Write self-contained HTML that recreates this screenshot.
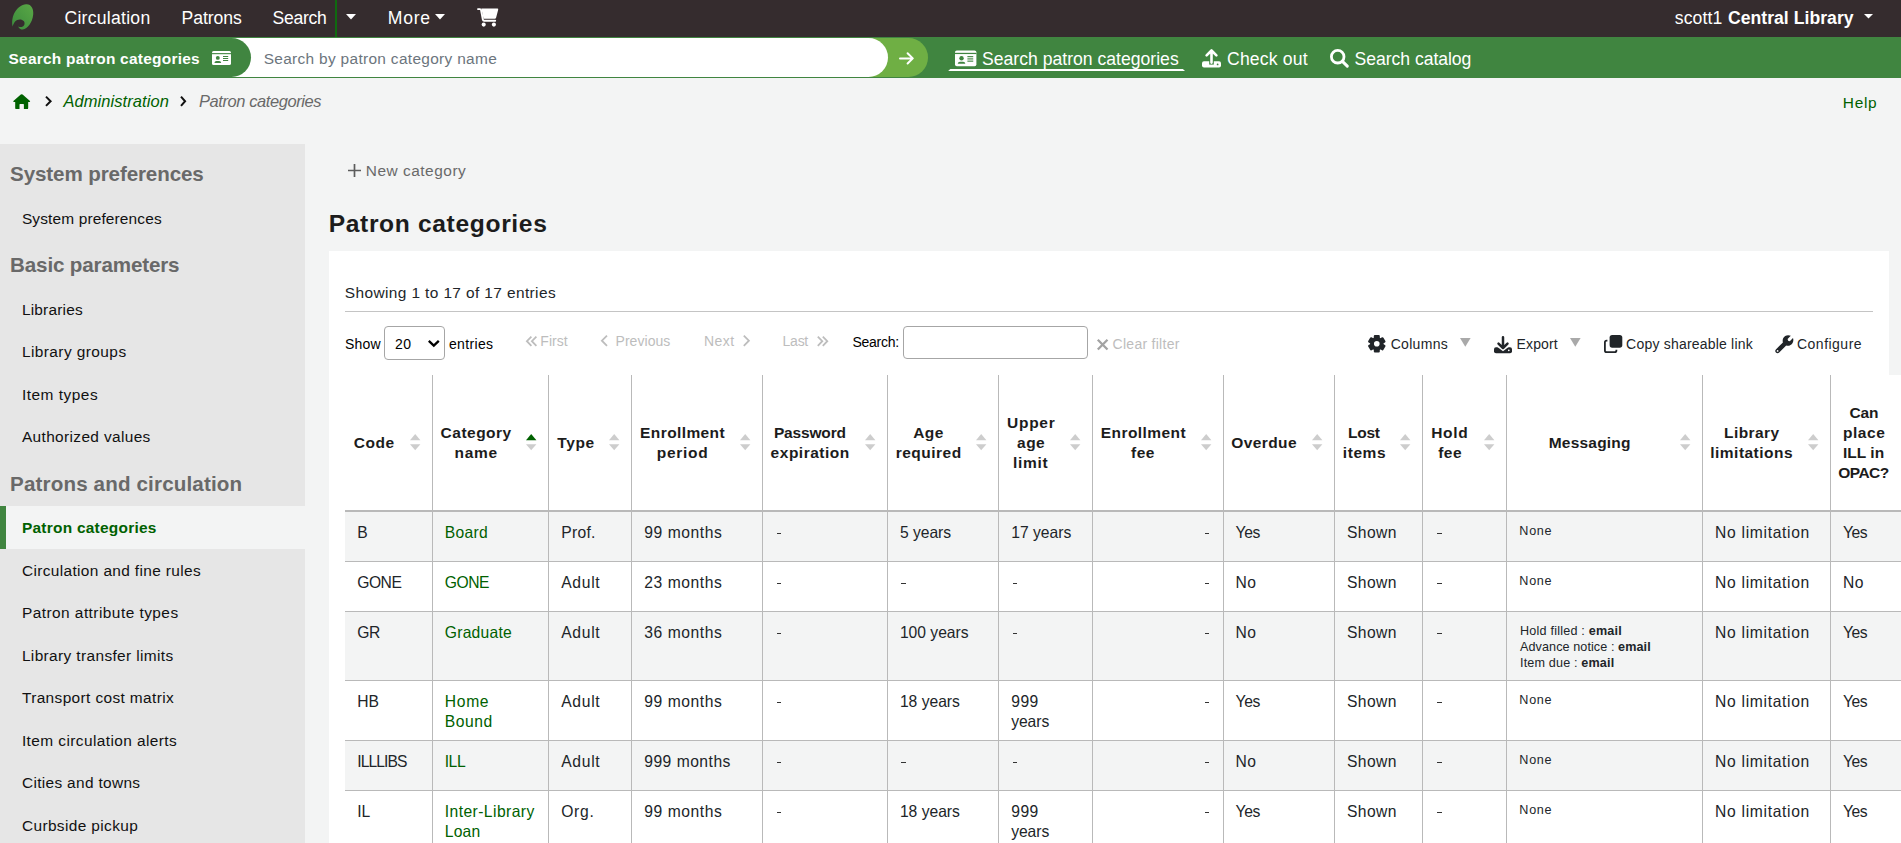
<!DOCTYPE html>
<html lang="en"><head><meta charset="utf-8"><title>Patron categories &rsaquo; Administration &rsaquo; Koha</title><style>
html,body{margin:0;padding:0}
body{width:1901px;height:843px;overflow:hidden;position:relative;background:#f3f4f4;font-family:"Liberation Sans",sans-serif;}
.t{position:absolute;white-space:pre;line-height:1;}
svg{display:block;overflow:visible}
</style></head><body>
<div style="position:absolute;left:0px;top:0px;width:1901px;height:37px;background:#352c2e;"></div>
<svg style="position:absolute;left:11.5px;top:3.5px;" width="22" height="26" viewBox="0 0 22 26"><defs><linearGradient id="lg" x1="0" y1="1" x2="1" y2="0"><stop offset="0" stop-color="#3b8a3c"/><stop offset="1" stop-color="#5aa846"/></linearGradient></defs><path fill="url(#lg)" d="M0.6 22.6 C-1.4 12.4 4.6 1.4 14.2 0.3 C19.4 0 21.8 5.2 21.2 10.6 C20.4 18.6 15.6 25 10.8 25.6 C8.6 25.6 6.8 24.4 6.2 22.4 C8.4 23.6 11 23.4 12.2 21 C13.6 17.6 11 15.4 7.8 15.4 C3.8 15.4 1.6 18.6 0.6 22.6 Z"/></svg>
<span class="t" style="letter-spacing:0.266px;left:64.42px;top:8px;font-size:17.6px;font-weight:400;font-style:normal;color:#fff;line-height:20px;">Circulation</span>
<span class="t" style="letter-spacing:-0.077px;left:181.62px;top:8px;font-size:17.6px;font-weight:400;font-style:normal;color:#fff;line-height:20px;">Patrons</span>
<span class="t" style="letter-spacing:-0.254px;left:272.42px;top:8px;font-size:17.6px;font-weight:400;font-style:normal;color:#fff;line-height:20px;">Search</span>
<div style="position:absolute;left:335px;top:0px;width:2px;height:37px;background:#0f6b0f;"></div>
<svg style="position:absolute;left:346px;top:14px;" width="10" height="5.5" viewBox="0 0 10 5.5"><path fill="#fff" d="M0 0H10L5 5.5Z"/></svg>
<span class="t" style="letter-spacing:0.700px;left:387.82px;top:8px;font-size:17.6px;font-weight:400;font-style:normal;color:#fff;line-height:20px;">More</span>
<svg style="position:absolute;left:435px;top:14px;" width="10" height="5.5" viewBox="0 0 10 5.5"><path fill="#fff" d="M0 0H10L5 5.5Z"/></svg>
<svg style="position:absolute;left:476.8px;top:8px;" width="21.4" height="18.8" viewBox="0 0 21.4 18.8"><path fill="#fff" d="M4.4 0.6H20.4Q21.5 0.6 21.2 1.7L19.1 9.7Q18.8 10.7 17.8 10.7H6.6Z"/><path fill="none" stroke="#fff" stroke-width="1.9" stroke-linecap="round" stroke-linejoin="round" d="M1 1.1H3Q3.8 1.1 4 1.9L5.9 11.7Q6.1 12.7 7.1 12.7H18.2"/><circle fill="#fff" cx="6.7" cy="16.6" r="2.05"/><circle fill="#fff" cx="16.9" cy="16.6" r="2.05"/></svg>
<span class="t" style="letter-spacing:0.085px;left:1674.82px;top:8px;font-size:17.6px;font-weight:400;font-style:normal;color:#fff;line-height:20px;">scott1</span>
<span class="t" style="letter-spacing:0.037px;left:1727.92px;top:8px;font-size:17.6px;font-weight:700;font-style:normal;color:#fff;line-height:20px;">Central Library</span>
<svg style="position:absolute;left:1863.8px;top:14px;" width="9" height="4.6" viewBox="0 0 9 4.6"><path fill="#fff" d="M0 0H9L4.5 4.6Z"/></svg>
<div style="position:absolute;left:0px;top:37px;width:1901px;height:41px;background:#408540;"></div>
<div style="position:absolute;left:868px;top:38px;width:60px;height:39px;background:#6faf44;border-radius:0 19.5px 19.5px 0;"></div>
<div style="position:absolute;left:200px;top:38px;width:688px;height:39px;background:#fff;border-radius:0 19.5px 19.5px 0;"></div>
<div style="position:absolute;left:0px;top:38px;width:251px;height:39px;background:#408540;border-radius:0 19.5px 19.5px 0;"></div>
<span class="t" style="letter-spacing:0.251px;left:8.53px;top:50px;font-size:15.45px;font-weight:700;font-style:normal;color:#fff;line-height:17px;">Search patron categories</span>
<svg style="position:absolute;left:212px;top:51px;" width="19" height="14" viewBox="0 0 19 14"><rect x="0" y="0" width="19" height="14" rx="1.6" fill="#fff"/><rect x="0" y="2.1" width="19" height="1.1" fill="#408540"/><circle cx="5.8" cy="6.9" r="1.95" fill="#408540"/><path fill="#408540" d="M2.4 11.9Q2.6 10 4.4 10H7.2Q9 10 9.2 11.9Z"/><rect x="11" y="5" width="5.2" height="1" fill="#408540"/><rect x="11" y="7" width="5.2" height="1" fill="#408540"/><rect x="11" y="9" width="5.2" height="1" fill="#408540"/></svg>
<span class="t" style="letter-spacing:0.317px;left:263.63px;top:50px;font-size:15.45px;font-weight:400;font-style:normal;color:#6c757d;line-height:17px;">Search by patron category name</span>
<svg style="position:absolute;left:898.7px;top:51.6px;" width="15" height="12.8" viewBox="0 0 15 12.8"><path fill="none" stroke="#fff" stroke-width="2" stroke-linecap="round" stroke-linejoin="round" d="M1 6.4H13.4M8.6 1.3L13.8 6.4L8.6 11.5"/></svg>
<svg style="position:absolute;left:955.4px;top:49.9px;" width="21.4" height="16.7" viewBox="0 0 19 14"><rect x="0" y="0" width="19" height="14" rx="1.6" fill="#fff"/><rect x="0" y="2.1" width="19" height="1.1" fill="#408540"/><circle cx="5.8" cy="6.9" r="1.95" fill="#408540"/><path fill="#408540" d="M2.4 11.9Q2.6 10 4.4 10H7.2Q9 10 9.2 11.9Z"/><rect x="11" y="5" width="5.2" height="1" fill="#408540"/><rect x="11" y="7" width="5.2" height="1" fill="#408540"/><rect x="11" y="9" width="5.2" height="1" fill="#408540"/></svg>
<span class="t" style="letter-spacing:0.004px;left:982.02px;top:49px;font-size:17.6px;font-weight:400;font-style:normal;color:#fff;line-height:20px;">Search patron categories</span>
<div style="position:absolute;left:948.2px;top:69px;width:236.8px;height:2.1px;background:#fff;clip-path:polygon(2.1px 0,calc(100% - 2.1px) 0,100% 100%,0 100%);"></div>
<svg style="position:absolute;left:1201.8px;top:49px;" width="19" height="18.5" viewBox="0 0 19 18.5"><rect x="0" y="12.3" width="19" height="6.2" rx="2" fill="#fff"/><rect x="7.2" y="5" width="4.6" height="10.6" fill="#408540"/><path fill="none" stroke="#fff" stroke-width="2.6" stroke-linecap="round" stroke-linejoin="round" d="M9.5 13.6V1.8M4.6 6.4L9.5 1.5L14.4 6.4"/><circle cx="15.6" cy="15.4" r="0.9" fill="#408540"/></svg>
<span class="t" style="letter-spacing:0.183px;left:1227.02px;top:49px;font-size:17.6px;font-weight:400;font-style:normal;color:#fff;line-height:20px;">Check out</span>
<svg style="position:absolute;left:1330.2px;top:49px;" width="19" height="18.5" viewBox="0 0 19 18.5"><circle cx="7.7" cy="7.7" r="6.3" fill="none" stroke="#fff" stroke-width="2.8"/><path stroke="#fff" stroke-width="3" stroke-linecap="round" d="M12.4 12.4L17.3 17.1"/></svg>
<span class="t" style="letter-spacing:-0.038px;left:1354.52px;top:49px;font-size:17.6px;font-weight:400;font-style:normal;color:#fff;line-height:20px;">Search catalog</span>
<svg style="position:absolute;left:12.8px;top:93.9px;" width="17.4" height="15.1" viewBox="0 0 17.4 15.1"><path fill="#006100" d="M8.7 0.2Q9.2 0.2 9.6 0.6L17 7Q17.6 7.7 16.6 7.9H15.2V13.9Q15.2 15.1 14 15.1H10.9V10.6Q10.9 10 10.3 10H7.1Q6.5 10 6.5 10.6V15.1H3.4Q2.2 15.1 2.2 13.9V7.9H0.8Q-0.2 7.7 0.4 7L7.8 0.6Q8.2 0.2 8.7 0.2Z"/></svg>
<svg style="position:absolute;left:45.4px;top:95.5px;" width="7" height="10.5" viewBox="0 0 7 10.5"><path fill="none" stroke="#111" stroke-width="2.0" d="M1 0.6L5.6 5.25L1 9.9"/></svg>
<span class="t" style="letter-spacing:0.094px;left:63.38px;top:92px;font-size:16.48px;font-weight:400;font-style:italic;color:#006100;line-height:18px;">Administration</span>
<svg style="position:absolute;left:180.1px;top:95.5px;" width="6.5" height="10.5" viewBox="0 0 6.5 10.5"><path fill="none" stroke="#111" stroke-width="2.0" d="M1 0.6L5.1 5.25L1 9.9"/></svg>
<span class="t" style="letter-spacing:-0.401px;left:198.88px;top:92px;font-size:16.48px;font-weight:400;font-style:italic;color:#696969;line-height:18px;">Patron categories</span>
<span class="t" style="letter-spacing:0.700px;left:1842.83px;top:94px;font-size:15.45px;font-weight:400;font-style:normal;color:#006100;line-height:17px;">Help</span>
<div style="position:absolute;left:0px;top:144px;width:305px;height:699px;background:#e6e6e6;"></div>
<div style="position:absolute;left:0px;top:506px;width:305px;height:43px;background:#f3f4f4;border-left:6px solid #408540;box-sizing:border-box;"></div>
<span class="t" style="letter-spacing:-0.119px;left:10.07px;top:162px;font-size:20.6px;font-weight:700;font-style:normal;color:#696969;line-height:23px;">System preferences</span>
<span class="t" style="letter-spacing:-0.151px;left:10.07px;top:253px;font-size:20.6px;font-weight:700;font-style:normal;color:#696969;line-height:23px;">Basic parameters</span>
<span class="t" style="letter-spacing:0.144px;left:10.07px;top:472px;font-size:20.6px;font-weight:700;font-style:normal;color:#696969;line-height:23px;">Patrons and circulation</span>
<span class="t" style="letter-spacing:0.142px;left:21.93px;top:210px;font-size:15.45px;font-weight:400;font-style:normal;color:#111;line-height:17px;">System preferences</span>
<span class="t" style="letter-spacing:0.198px;left:21.93px;top:301px;font-size:15.45px;font-weight:400;font-style:normal;color:#111;line-height:17px;">Libraries</span>
<span class="t" style="letter-spacing:0.423px;left:21.93px;top:343px;font-size:15.45px;font-weight:400;font-style:normal;color:#111;line-height:17px;">Library groups</span>
<span class="t" style="letter-spacing:0.497px;left:21.93px;top:386px;font-size:15.45px;font-weight:400;font-style:normal;color:#111;line-height:17px;">Item types</span>
<span class="t" style="letter-spacing:0.354px;left:21.93px;top:428px;font-size:15.45px;font-weight:400;font-style:normal;color:#111;line-height:17px;">Authorized values</span>
<span class="t" style="letter-spacing:0.355px;left:21.93px;top:562px;font-size:15.45px;font-weight:400;font-style:normal;color:#111;line-height:17px;">Circulation and fine rules</span>
<span class="t" style="letter-spacing:0.450px;left:21.93px;top:604px;font-size:15.45px;font-weight:400;font-style:normal;color:#111;line-height:17px;">Patron attribute types</span>
<span class="t" style="letter-spacing:0.365px;left:21.93px;top:647px;font-size:15.45px;font-weight:400;font-style:normal;color:#111;line-height:17px;">Library transfer limits</span>
<span class="t" style="letter-spacing:0.369px;left:21.93px;top:689px;font-size:15.45px;font-weight:400;font-style:normal;color:#111;line-height:17px;">Transport cost matrix</span>
<span class="t" style="letter-spacing:0.410px;left:21.93px;top:732px;font-size:15.45px;font-weight:400;font-style:normal;color:#111;line-height:17px;">Item circulation alerts</span>
<span class="t" style="letter-spacing:0.322px;left:21.93px;top:774px;font-size:15.45px;font-weight:400;font-style:normal;color:#111;line-height:17px;">Cities and towns</span>
<span class="t" style="letter-spacing:0.370px;left:21.93px;top:817px;font-size:15.45px;font-weight:400;font-style:normal;color:#111;line-height:17px;">Curbside pickup</span>
<span class="t" style="letter-spacing:0.255px;left:21.93px;top:519px;font-size:15.45px;font-weight:700;font-style:normal;color:#006100;line-height:17px;">Patron categories</span>
<svg style="position:absolute;left:347.5px;top:163.7px;" width="13" height="13" viewBox="0 0 13 13"><path stroke="#5c5c5c" stroke-width="1.7" d="M6.5 0V13M0 6.5H13"/></svg>
<span class="t" style="letter-spacing:0.518px;left:365.73px;top:162px;font-size:15.45px;font-weight:400;font-style:normal;color:#696969;line-height:17px;">New category</span>
<span class="t" style="letter-spacing:0.654px;left:328.67px;top:210px;font-size:24.6px;font-weight:700;font-style:normal;color:#1c1c1c;line-height:27px;">Patron categories</span>
<div style="position:absolute;left:329px;top:251px;width:1560px;height:592px;background:#fff;"></div>
<span class="t" style="letter-spacing:0.386px;left:344.83px;top:284px;font-size:15.45px;font-weight:400;font-style:normal;color:#212529;line-height:17px;">Showing 1 to 17 of 17 entries</span>
<div style="position:absolute;left:345px;top:311px;width:1528px;height:1px;background:#c4c4c4;"></div>
<span class="t" style="letter-spacing:0.243px;left:344.9px;top:336px;font-size:14.01px;font-weight:400;font-style:normal;color:#000;line-height:16px;">Show</span>
<div style="position:absolute;left:384px;top:326px;width:61px;height:34px;box-sizing:border-box;border:1px solid #a6a6a6;border-radius:4px;background:#fff"></div>
<span class="t" style="letter-spacing:0.450px;left:395.0px;top:336px;font-size:14.01px;font-weight:400;font-style:normal;color:#000;line-height:16px;">20</span>
<svg style="position:absolute;left:428.4px;top:340.4px;" width="11.6" height="7" viewBox="0 0 11.6 7"><path fill="none" stroke="#000" stroke-width="2.3" stroke-linejoin="miter" d="M0.8 0.9L5.8 5.7L10.8 0.9"/></svg>
<span class="t" style="letter-spacing:0.338px;left:449.0px;top:336px;font-size:14.01px;font-weight:400;font-style:normal;color:#000;line-height:16px;">entries</span>
<svg style="position:absolute;left:525.6px;top:335.6px;" width="6.2" height="10.4" viewBox="0 0 6.2 10.4"><path fill="none" stroke="#bdbdbd" stroke-width="1.8" d="M5.4 0.6L0.9 5.2L5.4 9.8"/></svg>
<svg style="position:absolute;left:531.2px;top:335.6px;" width="6.2" height="10.4" viewBox="0 0 6.2 10.4"><path fill="none" stroke="#bdbdbd" stroke-width="1.8" d="M5.4 0.6L0.9 5.2L5.4 9.8"/></svg>
<span class="t" style="letter-spacing:0.035px;left:540.3px;top:333px;font-size:14.01px;font-weight:400;font-style:normal;color:#bdbdbd;line-height:16px;">First</span>
<svg style="position:absolute;left:600.6px;top:334.9px;" width="6.8" height="11.4" viewBox="0 0 6.8 11.4"><path fill="none" stroke="#bdbdbd" stroke-width="1.8" d="M6.0 0.6L0.9 5.7L6.0 10.8"/></svg>
<span class="t" style="letter-spacing:0.056px;left:615.5px;top:333px;font-size:14.01px;font-weight:400;font-style:normal;color:#bdbdbd;line-height:16px;">Previous</span>
<span class="t" style="letter-spacing:0.488px;left:703.9px;top:333px;font-size:14.01px;font-weight:400;font-style:normal;color:#bdbdbd;line-height:16px;">Next</span>
<svg style="position:absolute;left:742.5px;top:334.9px;" width="6.8" height="11.4" viewBox="0 0 6.8 11.4"><path fill="none" stroke="#bdbdbd" stroke-width="1.8" d="M0.8 0.6L5.8999999999999995 5.7L0.8 10.8"/></svg>
<span class="t" style="letter-spacing:-0.270px;left:782.6px;top:333px;font-size:14.01px;font-weight:400;font-style:normal;color:#bdbdbd;line-height:16px;">Last</span>
<svg style="position:absolute;left:816.5px;top:335.6px;" width="6.2" height="10.4" viewBox="0 0 6.2 10.4"><path fill="none" stroke="#bdbdbd" stroke-width="1.8" d="M0.8 0.6L5.3 5.2L0.8 9.8"/></svg>
<svg style="position:absolute;left:822.1px;top:335.6px;" width="6.2" height="10.4" viewBox="0 0 6.2 10.4"><path fill="none" stroke="#bdbdbd" stroke-width="1.8" d="M0.8 0.6L5.3 5.2L0.8 9.8"/></svg>
<span class="t" style="letter-spacing:-0.265px;left:852.5px;top:334px;font-size:14.01px;font-weight:400;font-style:normal;color:#000;line-height:16px;">Search:</span>
<div style="position:absolute;left:903px;top:326px;width:185px;height:33px;box-sizing:border-box;border:1px solid #a6a6a6;border-radius:4px;background:#fff"></div>
<svg style="position:absolute;left:1097.1px;top:338.7px;" width="11.3" height="11.3" viewBox="0 0 11.3 11.3"><path stroke="#a3a3a3" stroke-width="2.3" d="M0.8 0.8L10.5 10.5M10.5 0.8L0.8 10.5"/></svg>
<span class="t" style="letter-spacing:0.269px;left:1112.6px;top:336px;font-size:14.01px;font-weight:400;font-style:normal;color:#bdbdbd;line-height:16px;">Clear filter</span>
<svg style="position:absolute;left:1368.1px;top:335.2px;" width="17.6" height="17.6" viewBox="0 0 17.6 17.6"><rect x="5.81" y="0" width="5.98" height="5.28" rx="1.06" transform="rotate(0 8.8 8.8)" fill="#212529"/><rect x="5.81" y="0" width="5.98" height="5.28" rx="1.06" transform="rotate(60 8.8 8.8)" fill="#212529"/><rect x="5.81" y="0" width="5.98" height="5.28" rx="1.06" transform="rotate(120 8.8 8.8)" fill="#212529"/><rect x="5.81" y="0" width="5.98" height="5.28" rx="1.06" transform="rotate(180 8.8 8.8)" fill="#212529"/><rect x="5.81" y="0" width="5.98" height="5.28" rx="1.06" transform="rotate(240 8.8 8.8)" fill="#212529"/><rect x="5.81" y="0" width="5.98" height="5.28" rx="1.06" transform="rotate(300 8.8 8.8)" fill="#212529"/><circle cx="8.8" cy="8.8" r="6.69" fill="#212529"/><circle cx="8.8" cy="8.8" r="2.82" fill="#fff"/></svg>
<span class="t" style="letter-spacing:0.302px;left:1390.7px;top:336px;font-size:14.01px;font-weight:400;font-style:normal;color:#212529;line-height:16px;">Columns</span>
<svg style="position:absolute;left:1460.2px;top:338px;" width="10.6" height="8.8" viewBox="0 0 10.6 8.8"><path fill="#a9a9a9" d="M0 0H10.6L5.3 8.8Z"/></svg>
<svg style="position:absolute;left:1493.7px;top:335.5px;" width="18" height="17.2" viewBox="0 0 18 17.2"><rect x="0" y="11.2" width="18" height="6" rx="2" fill="#212529"/><path fill="#fff" d="M3.4 11H14.6L9 15.2Z"/><path fill="none" stroke="#212529" stroke-width="2.5" stroke-linecap="round" stroke-linejoin="round" d="M9 1.3V11.6M4.5 7.6L9 12L13.5 7.6"/><circle cx="14.8" cy="14.3" r="0.85" fill="#fff"/></svg>
<span class="t" style="letter-spacing:0.118px;left:1516.6px;top:336px;font-size:14.01px;font-weight:400;font-style:normal;color:#212529;line-height:16px;">Export</span>
<svg style="position:absolute;left:1570.3px;top:338px;" width="10.6" height="8.8" viewBox="0 0 10.6 8.8"><path fill="#a9a9a9" d="M0 0H10.6L5.3 8.8Z"/></svg>
<svg style="position:absolute;left:1603.7px;top:334.7px;" width="18.3" height="18" viewBox="0 0 18.3 18"><rect x="5.6" y="0" width="12.7" height="12.7" rx="2.6" fill="#212529"/><path fill="none" stroke="#212529" stroke-width="1.8" stroke-linejoin="round" d="M3.4 5.6H2.6Q0.9 5.6 0.9 7.3V15.4Q0.9 17.1 2.6 17.1H10.7Q12.4 17.1 12.4 15.4V14.8"/></svg>
<span class="t" style="letter-spacing:0.205px;left:1626.1px;top:336px;font-size:14.01px;font-weight:400;font-style:normal;color:#212529;line-height:16px;">Copy shareable link</span>
<svg style="position:absolute;left:1774.5px;top:334.7px;" width="18.5" height="18.4" viewBox="0 0 18.5 18.4"><path fill="#212529" d="M13.1 0.2C14.3 0.2 15.2 0.5 15.8 0.8L12.6 4L13.1 5.7L14.8 6.2L18 3C18.5 4.3 18.6 6.3 17.6 8C16.3 10.3 13.6 11.3 11.2 10.6L4.2 17.6C3.3 18.5 1.8 18.5 0.9 17.6C0 16.7 0 15.3 0.9 14.4L7.9 7.4C7.2 5 8 2.4 10.2 1C11.1 0.4 12.1 0.2 13.1 0.2Z"/><circle cx="2.6" cy="15.9" r="0.9" fill="#fff"/></svg>
<span class="t" style="letter-spacing:0.482px;left:1797.0px;top:336px;font-size:14.01px;font-weight:400;font-style:normal;color:#212529;line-height:16px;">Configure</span>
<div style="position:absolute;left:345px;top:375px;width:1556px;height:468px;background:#fff;"></div>
<div style="position:absolute;left:345px;top:512px;width:1556px;height:49px;background:#f3f4f4;"></div>
<div style="position:absolute;left:345px;top:612px;width:1556px;height:68px;background:#f3f4f4;"></div>
<div style="position:absolute;left:345px;top:741px;width:1556px;height:49px;background:#f3f4f4;"></div>
<div style="position:absolute;left:345px;top:510px;width:1556px;height:2px;background:#b9b9b9;"></div>
<div style="position:absolute;left:345px;top:561px;width:1556px;height:1px;background:#b9b9b9;"></div>
<div style="position:absolute;left:345px;top:611px;width:1556px;height:1px;background:#b9b9b9;"></div>
<div style="position:absolute;left:345px;top:680px;width:1556px;height:1px;background:#b9b9b9;"></div>
<div style="position:absolute;left:345px;top:740px;width:1556px;height:1px;background:#b9b9b9;"></div>
<div style="position:absolute;left:345px;top:790px;width:1556px;height:1px;background:#b9b9b9;"></div>
<div style="position:absolute;left:345px;top:859px;width:1556px;height:1px;background:#b9b9b9;"></div>
<div style="position:absolute;left:432px;top:375px;width:1px;height:468px;background:#b9b9b9;"></div>
<div style="position:absolute;left:548px;top:375px;width:1px;height:468px;background:#b9b9b9;"></div>
<div style="position:absolute;left:631px;top:375px;width:1px;height:468px;background:#b9b9b9;"></div>
<div style="position:absolute;left:762px;top:375px;width:1px;height:468px;background:#b9b9b9;"></div>
<div style="position:absolute;left:887px;top:375px;width:1px;height:468px;background:#b9b9b9;"></div>
<div style="position:absolute;left:998px;top:375px;width:1px;height:468px;background:#b9b9b9;"></div>
<div style="position:absolute;left:1092px;top:375px;width:1px;height:468px;background:#b9b9b9;"></div>
<div style="position:absolute;left:1223px;top:375px;width:1px;height:468px;background:#b9b9b9;"></div>
<div style="position:absolute;left:1334px;top:375px;width:1px;height:468px;background:#b9b9b9;"></div>
<div style="position:absolute;left:1422px;top:375px;width:1px;height:468px;background:#b9b9b9;"></div>
<div style="position:absolute;left:1506px;top:375px;width:1px;height:468px;background:#b9b9b9;"></div>
<div style="position:absolute;left:1702px;top:375px;width:1px;height:468px;background:#b9b9b9;"></div>
<div style="position:absolute;left:1830px;top:375px;width:1px;height:468px;background:#b9b9b9;"></div>
<span class="t" style="letter-spacing:0.480px;left:353.83px;top:434px;font-size:15.5px;font-weight:700;font-style:normal;color:#1c1c1c;line-height:17px;">Code</span>
<span class="t" style="letter-spacing:0.487px;left:440.62px;top:424px;font-size:15.5px;font-weight:700;font-style:normal;color:#1c1c1c;line-height:17px;">Category</span>
<span class="t" style="letter-spacing:0.700px;left:454.62px;top:444px;font-size:15.5px;font-weight:700;font-style:normal;color:#1c1c1c;line-height:17px;">name</span>
<span class="t" style="letter-spacing:0.656px;left:557.23px;top:434px;font-size:15.5px;font-weight:700;font-style:normal;color:#1c1c1c;line-height:17px;">Type</span>
<span class="t" style="letter-spacing:0.394px;left:640.12px;top:424px;font-size:15.5px;font-weight:700;font-style:normal;color:#1c1c1c;line-height:17px;">Enrollment</span>
<span class="t" style="letter-spacing:0.705px;left:656.73px;top:444px;font-size:15.5px;font-weight:700;font-style:normal;color:#1c1c1c;line-height:17px;">period</span>
<span class="t" style="letter-spacing:-0.163px;left:773.93px;top:424px;font-size:15.5px;font-weight:700;font-style:normal;color:#1c1c1c;line-height:17px;">Password</span>
<span class="t" style="letter-spacing:0.514px;left:770.62px;top:444px;font-size:15.5px;font-weight:700;font-style:normal;color:#1c1c1c;line-height:17px;">expiration</span>
<span class="t" style="letter-spacing:0.450px;left:913.23px;top:424px;font-size:15.5px;font-weight:700;font-style:normal;color:#1c1c1c;line-height:17px;">Age</span>
<span class="t" style="letter-spacing:0.482px;left:895.73px;top:444px;font-size:15.5px;font-weight:700;font-style:normal;color:#1c1c1c;line-height:17px;">required</span>
<span class="t" style="letter-spacing:0.700px;left:1007.12px;top:414px;font-size:15.5px;font-weight:700;font-style:normal;color:#1c1c1c;line-height:17px;">Upper</span>
<span class="t" style="letter-spacing:0.450px;left:1017.12px;top:434px;font-size:15.5px;font-weight:700;font-style:normal;color:#1c1c1c;line-height:17px;">age</span>
<span class="t" style="letter-spacing:0.700px;left:1012.93px;top:454px;font-size:15.5px;font-weight:700;font-style:normal;color:#1c1c1c;line-height:17px;">limit</span>
<span class="t" style="letter-spacing:0.427px;left:1100.82px;top:424px;font-size:15.5px;font-weight:700;font-style:normal;color:#1c1c1c;line-height:17px;">Enrollment</span>
<span class="t" style="letter-spacing:0.450px;left:1131.02px;top:444px;font-size:15.5px;font-weight:700;font-style:normal;color:#1c1c1c;line-height:17px;">fee</span>
<span class="t" style="letter-spacing:0.417px;left:1231.22px;top:434px;font-size:15.5px;font-weight:700;font-style:normal;color:#1c1c1c;line-height:17px;">Overdue</span>
<span class="t" style="letter-spacing:-0.206px;left:1347.92px;top:424px;font-size:15.5px;font-weight:700;font-style:normal;color:#1c1c1c;line-height:17px;">Lost</span>
<span class="t" style="letter-spacing:0.600px;left:1342.72px;top:444px;font-size:15.5px;font-weight:700;font-style:normal;color:#1c1c1c;line-height:17px;">items</span>
<span class="t" style="letter-spacing:0.700px;left:1431.22px;top:424px;font-size:15.5px;font-weight:700;font-style:normal;color:#1c1c1c;line-height:17px;">Hold</span>
<span class="t" style="letter-spacing:0.450px;left:1438.22px;top:444px;font-size:15.5px;font-weight:700;font-style:normal;color:#1c1c1c;line-height:17px;">fee</span>
<span class="t" style="letter-spacing:0.211px;left:1548.72px;top:434px;font-size:15.5px;font-weight:700;font-style:normal;color:#1c1c1c;line-height:17px;">Messaging</span>
<span class="t" style="letter-spacing:0.405px;left:1724.12px;top:424px;font-size:15.5px;font-weight:700;font-style:normal;color:#1c1c1c;line-height:17px;">Library</span>
<span class="t" style="letter-spacing:0.468px;left:1710.32px;top:444px;font-size:15.5px;font-weight:700;font-style:normal;color:#1c1c1c;line-height:17px;">limitations</span>
<span class="t" style="letter-spacing:-0.153px;left:1849.42px;top:404px;font-size:15.5px;font-weight:700;font-style:normal;color:#1c1c1c;line-height:17px;">Can</span>
<span class="t" style="letter-spacing:0.587px;left:1842.92px;top:424px;font-size:15.5px;font-weight:700;font-style:normal;color:#1c1c1c;line-height:17px;">place</span>
<span class="t" style="letter-spacing:0.029px;left:1842.92px;top:444px;font-size:15.5px;font-weight:700;font-style:normal;color:#1c1c1c;line-height:17px;">ILL in</span>
<span class="t" style="letter-spacing:-0.530px;left:1838.22px;top:464px;font-size:15.5px;font-weight:700;font-style:normal;color:#1c1c1c;line-height:17px;">OPAC?</span>
<svg style="position:absolute;left:410.40000000000003px;top:434px;" width="10.4" height="16.4" viewBox="0 0 10.6 16.6"><path fill="#cdcdcd" d="M0 6.4L5.3 0L10.6 6.4Z"/><path fill="#cdcdcd" d="M0 10.4L5.3 16.6L10.6 10.4Z"/></svg>
<svg style="position:absolute;left:526.4px;top:434px;" width="10.4" height="16.4" viewBox="0 0 10.6 16.6"><path fill="#006100" d="M0 6.4L5.3 0L10.6 6.4Z"/><path fill="#cdcdcd" d="M0 10.4L5.3 16.6L10.6 10.4Z"/></svg>
<svg style="position:absolute;left:609.4px;top:434px;" width="10.4" height="16.4" viewBox="0 0 10.6 16.6"><path fill="#cdcdcd" d="M0 6.4L5.3 0L10.6 6.4Z"/><path fill="#cdcdcd" d="M0 10.4L5.3 16.6L10.6 10.4Z"/></svg>
<svg style="position:absolute;left:740.4px;top:434px;" width="10.4" height="16.4" viewBox="0 0 10.6 16.6"><path fill="#cdcdcd" d="M0 6.4L5.3 0L10.6 6.4Z"/><path fill="#cdcdcd" d="M0 10.4L5.3 16.6L10.6 10.4Z"/></svg>
<svg style="position:absolute;left:865.4px;top:434px;" width="10.4" height="16.4" viewBox="0 0 10.6 16.6"><path fill="#cdcdcd" d="M0 6.4L5.3 0L10.6 6.4Z"/><path fill="#cdcdcd" d="M0 10.4L5.3 16.6L10.6 10.4Z"/></svg>
<svg style="position:absolute;left:976.4px;top:434px;" width="10.4" height="16.4" viewBox="0 0 10.6 16.6"><path fill="#cdcdcd" d="M0 6.4L5.3 0L10.6 6.4Z"/><path fill="#cdcdcd" d="M0 10.4L5.3 16.6L10.6 10.4Z"/></svg>
<svg style="position:absolute;left:1070.3999999999999px;top:434px;" width="10.4" height="16.4" viewBox="0 0 10.6 16.6"><path fill="#cdcdcd" d="M0 6.4L5.3 0L10.6 6.4Z"/><path fill="#cdcdcd" d="M0 10.4L5.3 16.6L10.6 10.4Z"/></svg>
<svg style="position:absolute;left:1201.3999999999999px;top:434px;" width="10.4" height="16.4" viewBox="0 0 10.6 16.6"><path fill="#cdcdcd" d="M0 6.4L5.3 0L10.6 6.4Z"/><path fill="#cdcdcd" d="M0 10.4L5.3 16.6L10.6 10.4Z"/></svg>
<svg style="position:absolute;left:1312.3999999999999px;top:434px;" width="10.4" height="16.4" viewBox="0 0 10.6 16.6"><path fill="#cdcdcd" d="M0 6.4L5.3 0L10.6 6.4Z"/><path fill="#cdcdcd" d="M0 10.4L5.3 16.6L10.6 10.4Z"/></svg>
<svg style="position:absolute;left:1400.3999999999999px;top:434px;" width="10.4" height="16.4" viewBox="0 0 10.6 16.6"><path fill="#cdcdcd" d="M0 6.4L5.3 0L10.6 6.4Z"/><path fill="#cdcdcd" d="M0 10.4L5.3 16.6L10.6 10.4Z"/></svg>
<svg style="position:absolute;left:1484.3999999999999px;top:434px;" width="10.4" height="16.4" viewBox="0 0 10.6 16.6"><path fill="#cdcdcd" d="M0 6.4L5.3 0L10.6 6.4Z"/><path fill="#cdcdcd" d="M0 10.4L5.3 16.6L10.6 10.4Z"/></svg>
<svg style="position:absolute;left:1680.3999999999999px;top:434px;" width="10.4" height="16.4" viewBox="0 0 10.6 16.6"><path fill="#cdcdcd" d="M0 6.4L5.3 0L10.6 6.4Z"/><path fill="#cdcdcd" d="M0 10.4L5.3 16.6L10.6 10.4Z"/></svg>
<svg style="position:absolute;left:1808.3999999999999px;top:434px;" width="10.4" height="16.4" viewBox="0 0 10.6 16.6"><path fill="#cdcdcd" d="M0 6.4L5.3 0L10.6 6.4Z"/><path fill="#cdcdcd" d="M0 10.4L5.3 16.6L10.6 10.4Z"/></svg>
<span class="t" style="letter-spacing:-0.043px;left:357.22px;top:524px;font-size:15.66px;font-weight:400;font-style:normal;color:#212529;line-height:17px;">B</span>
<span class="t" style="letter-spacing:0.307px;left:444.72px;top:524px;font-size:15.66px;font-weight:400;font-style:normal;color:#006100;line-height:17px;">Board</span>
<span class="t" style="letter-spacing:0.283px;left:561.22px;top:524px;font-size:15.66px;font-weight:400;font-style:normal;color:#212529;line-height:17px;">Prof.</span>
<span class="t" style="letter-spacing:0.550px;left:644.22px;top:524px;font-size:15.66px;font-weight:400;font-style:normal;color:#212529;line-height:17px;">99 months</span>
<div style="position:absolute;left:776.5px;top:533px;width:4.8px;height:1.4px;background:#333;"></div>
<span class="t" style="letter-spacing:-0.022px;left:899.92px;top:524px;font-size:15.66px;font-weight:400;font-style:normal;color:#212529;line-height:17px;">5 years</span>
<span class="t" style="letter-spacing:-0.008px;left:1011.22px;top:524px;font-size:15.66px;font-weight:400;font-style:normal;color:#212529;line-height:17px;">17 years</span>
<div style="position:absolute;left:1204.6px;top:533px;width:4.8px;height:1.4px;background:#333;"></div>
<span class="t" style="letter-spacing:-0.450px;left:1235.62px;top:524px;font-size:15.66px;font-weight:400;font-style:normal;color:#212529;line-height:17px;">Yes</span>
<span class="t" style="letter-spacing:0.384px;left:1347.02px;top:524px;font-size:15.66px;font-weight:400;font-style:normal;color:#212529;line-height:17px;">Shown</span>
<div style="position:absolute;left:1437.3px;top:533px;width:4.8px;height:1.4px;background:#333;"></div>
<span class="t" style="letter-spacing:0.700px;left:1519.37px;top:524px;font-size:12.6px;font-weight:400;font-style:normal;color:#212529;line-height:14px;">None</span>
<span class="t" style="letter-spacing:0.672px;left:1715.12px;top:524px;font-size:15.66px;font-weight:400;font-style:normal;color:#212529;line-height:17px;">No limitation</span>
<span class="t" style="letter-spacing:-0.450px;left:1842.92px;top:524px;font-size:15.66px;font-weight:400;font-style:normal;color:#212529;line-height:17px;">Yes</span>
<span class="t" style="letter-spacing:-0.500px;left:357.22px;top:574px;font-size:15.66px;font-weight:400;font-style:normal;color:#212529;line-height:17px;">GONE</span>
<span class="t" style="letter-spacing:-0.466px;left:444.72px;top:574px;font-size:15.66px;font-weight:400;font-style:normal;color:#006100;line-height:17px;">GONE</span>
<span class="t" style="letter-spacing:0.700px;left:561.22px;top:574px;font-size:15.66px;font-weight:400;font-style:normal;color:#212529;line-height:17px;">Adult</span>
<span class="t" style="letter-spacing:0.550px;left:644.22px;top:574px;font-size:15.66px;font-weight:400;font-style:normal;color:#212529;line-height:17px;">23 months</span>
<div style="position:absolute;left:776.5px;top:583px;width:4.8px;height:1.4px;background:#333;"></div>
<div style="position:absolute;left:901.2px;top:583px;width:4.8px;height:1.4px;background:#333;"></div>
<div style="position:absolute;left:1012.5px;top:583px;width:4.8px;height:1.4px;background:#333;"></div>
<div style="position:absolute;left:1204.6px;top:583px;width:4.8px;height:1.4px;background:#333;"></div>
<span class="t" style="letter-spacing:0.450px;left:1235.62px;top:574px;font-size:15.66px;font-weight:400;font-style:normal;color:#212529;line-height:17px;">No</span>
<span class="t" style="letter-spacing:0.384px;left:1347.02px;top:574px;font-size:15.66px;font-weight:400;font-style:normal;color:#212529;line-height:17px;">Shown</span>
<div style="position:absolute;left:1437.3px;top:583px;width:4.8px;height:1.4px;background:#333;"></div>
<span class="t" style="letter-spacing:0.700px;left:1519.37px;top:574px;font-size:12.6px;font-weight:400;font-style:normal;color:#212529;line-height:14px;">None</span>
<span class="t" style="letter-spacing:0.672px;left:1715.12px;top:574px;font-size:15.66px;font-weight:400;font-style:normal;color:#212529;line-height:17px;">No limitation</span>
<span class="t" style="letter-spacing:0.450px;left:1842.92px;top:574px;font-size:15.66px;font-weight:400;font-style:normal;color:#212529;line-height:17px;">No</span>
<span class="t" style="letter-spacing:-0.450px;left:357.22px;top:624px;font-size:15.66px;font-weight:400;font-style:normal;color:#212529;line-height:17px;">GR</span>
<span class="t" style="letter-spacing:0.261px;left:444.72px;top:624px;font-size:15.66px;font-weight:400;font-style:normal;color:#006100;line-height:17px;">Graduate</span>
<span class="t" style="letter-spacing:0.700px;left:561.22px;top:624px;font-size:15.66px;font-weight:400;font-style:normal;color:#212529;line-height:17px;">Adult</span>
<span class="t" style="letter-spacing:0.550px;left:644.22px;top:624px;font-size:15.66px;font-weight:400;font-style:normal;color:#212529;line-height:17px;">36 months</span>
<div style="position:absolute;left:776.5px;top:633px;width:4.8px;height:1.4px;background:#333;"></div>
<span class="t" style="letter-spacing:-0.007px;left:899.92px;top:624px;font-size:15.66px;font-weight:400;font-style:normal;color:#212529;line-height:17px;">100 years</span>
<div style="position:absolute;left:1012.5px;top:633px;width:4.8px;height:1.4px;background:#333;"></div>
<div style="position:absolute;left:1204.6px;top:633px;width:4.8px;height:1.4px;background:#333;"></div>
<span class="t" style="letter-spacing:0.450px;left:1235.62px;top:624px;font-size:15.66px;font-weight:400;font-style:normal;color:#212529;line-height:17px;">No</span>
<span class="t" style="letter-spacing:0.384px;left:1347.02px;top:624px;font-size:15.66px;font-weight:400;font-style:normal;color:#212529;line-height:17px;">Shown</span>
<div style="position:absolute;left:1437.3px;top:633px;width:4.8px;height:1.4px;background:#333;"></div>
<span class="t" style="letter-spacing:0.209px;left:1520px;top:624px;line-height:14px;font-size:12.6px;color:#212529;">Hold filled : <b>email</b></span>
<span class="t" style="letter-spacing:0.088px;left:1520px;top:640px;line-height:14px;font-size:12.6px;color:#212529;">Advance notice : <b>email</b></span>
<span class="t" style="letter-spacing:0.164px;left:1520px;top:656px;line-height:14px;font-size:12.6px;color:#212529;">Item due : <b>email</b></span>
<span class="t" style="letter-spacing:0.672px;left:1715.12px;top:624px;font-size:15.66px;font-weight:400;font-style:normal;color:#212529;line-height:17px;">No limitation</span>
<span class="t" style="letter-spacing:-0.450px;left:1842.92px;top:624px;font-size:15.66px;font-weight:400;font-style:normal;color:#212529;line-height:17px;">Yes</span>
<span class="t" style="letter-spacing:-0.140px;left:357.22px;top:693px;font-size:15.66px;font-weight:400;font-style:normal;color:#212529;line-height:17px;">HB</span>
<span class="t" style="letter-spacing:0.700px;left:444.72px;top:693px;font-size:15.66px;font-weight:400;font-style:normal;color:#006100;line-height:17px;">Home</span>
<span class="t" style="letter-spacing:0.582px;left:444.72px;top:713px;font-size:15.66px;font-weight:400;font-style:normal;color:#006100;line-height:17px;">Bound</span>
<span class="t" style="letter-spacing:0.700px;left:561.22px;top:693px;font-size:15.66px;font-weight:400;font-style:normal;color:#212529;line-height:17px;">Adult</span>
<span class="t" style="letter-spacing:0.550px;left:644.22px;top:693px;font-size:15.66px;font-weight:400;font-style:normal;color:#212529;line-height:17px;">99 months</span>
<div style="position:absolute;left:776.5px;top:702px;width:4.8px;height:1.4px;background:#333;"></div>
<span class="t" style="letter-spacing:-0.008px;left:899.92px;top:693px;font-size:15.66px;font-weight:400;font-style:normal;color:#212529;line-height:17px;">18 years</span>
<span class="t" style="letter-spacing:0.450px;left:1011.22px;top:693px;font-size:15.66px;font-weight:400;font-style:normal;color:#212529;line-height:17px;">999</span>
<span class="t" style="letter-spacing:-0.072px;left:1011.22px;top:713px;font-size:15.66px;font-weight:400;font-style:normal;color:#212529;line-height:17px;">years</span>
<div style="position:absolute;left:1204.6px;top:702px;width:4.8px;height:1.4px;background:#333;"></div>
<span class="t" style="letter-spacing:-0.450px;left:1235.62px;top:693px;font-size:15.66px;font-weight:400;font-style:normal;color:#212529;line-height:17px;">Yes</span>
<span class="t" style="letter-spacing:0.384px;left:1347.02px;top:693px;font-size:15.66px;font-weight:400;font-style:normal;color:#212529;line-height:17px;">Shown</span>
<div style="position:absolute;left:1437.3px;top:702px;width:4.8px;height:1.4px;background:#333;"></div>
<span class="t" style="letter-spacing:0.700px;left:1519.37px;top:693px;font-size:12.6px;font-weight:400;font-style:normal;color:#212529;line-height:14px;">None</span>
<span class="t" style="letter-spacing:0.672px;left:1715.12px;top:693px;font-size:15.66px;font-weight:400;font-style:normal;color:#212529;line-height:17px;">No limitation</span>
<span class="t" style="letter-spacing:-0.450px;left:1842.92px;top:693px;font-size:15.66px;font-weight:400;font-style:normal;color:#212529;line-height:17px;">Yes</span>
<span class="t" style="letter-spacing:-0.901px;left:357.22px;top:753px;font-size:15.66px;font-weight:400;font-style:normal;color:#212529;line-height:17px;">ILLLIBS</span>
<span class="t" style="letter-spacing:-0.450px;left:444.72px;top:753px;font-size:15.66px;font-weight:400;font-style:normal;color:#006100;line-height:17px;">ILL</span>
<span class="t" style="letter-spacing:0.700px;left:561.22px;top:753px;font-size:15.66px;font-weight:400;font-style:normal;color:#212529;line-height:17px;">Adult</span>
<span class="t" style="letter-spacing:0.487px;left:644.22px;top:753px;font-size:15.66px;font-weight:400;font-style:normal;color:#212529;line-height:17px;">999 months</span>
<div style="position:absolute;left:776.5px;top:762px;width:4.8px;height:1.4px;background:#333;"></div>
<div style="position:absolute;left:901.2px;top:762px;width:4.8px;height:1.4px;background:#333;"></div>
<div style="position:absolute;left:1012.5px;top:762px;width:4.8px;height:1.4px;background:#333;"></div>
<div style="position:absolute;left:1204.6px;top:762px;width:4.8px;height:1.4px;background:#333;"></div>
<span class="t" style="letter-spacing:0.450px;left:1235.62px;top:753px;font-size:15.66px;font-weight:400;font-style:normal;color:#212529;line-height:17px;">No</span>
<span class="t" style="letter-spacing:0.384px;left:1347.02px;top:753px;font-size:15.66px;font-weight:400;font-style:normal;color:#212529;line-height:17px;">Shown</span>
<div style="position:absolute;left:1437.3px;top:762px;width:4.8px;height:1.4px;background:#333;"></div>
<span class="t" style="letter-spacing:0.700px;left:1519.37px;top:753px;font-size:12.6px;font-weight:400;font-style:normal;color:#212529;line-height:14px;">None</span>
<span class="t" style="letter-spacing:0.672px;left:1715.12px;top:753px;font-size:15.66px;font-weight:400;font-style:normal;color:#212529;line-height:17px;">No limitation</span>
<span class="t" style="letter-spacing:-0.450px;left:1842.92px;top:753px;font-size:15.66px;font-weight:400;font-style:normal;color:#212529;line-height:17px;">Yes</span>
<span class="t" style="letter-spacing:-0.152px;left:357.22px;top:803px;font-size:15.66px;font-weight:400;font-style:normal;color:#212529;line-height:17px;">IL</span>
<span class="t" style="letter-spacing:0.434px;left:444.72px;top:803px;font-size:15.66px;font-weight:400;font-style:normal;color:#006100;line-height:17px;">Inter-Library</span>
<span class="t" style="letter-spacing:0.222px;left:444.72px;top:823px;font-size:15.66px;font-weight:400;font-style:normal;color:#006100;line-height:17px;">Loan</span>
<span class="t" style="letter-spacing:0.686px;left:561.22px;top:803px;font-size:15.66px;font-weight:400;font-style:normal;color:#212529;line-height:17px;">Org.</span>
<span class="t" style="letter-spacing:0.550px;left:644.22px;top:803px;font-size:15.66px;font-weight:400;font-style:normal;color:#212529;line-height:17px;">99 months</span>
<div style="position:absolute;left:776.5px;top:812px;width:4.8px;height:1.4px;background:#333;"></div>
<span class="t" style="letter-spacing:-0.008px;left:899.92px;top:803px;font-size:15.66px;font-weight:400;font-style:normal;color:#212529;line-height:17px;">18 years</span>
<span class="t" style="letter-spacing:0.450px;left:1011.22px;top:803px;font-size:15.66px;font-weight:400;font-style:normal;color:#212529;line-height:17px;">999</span>
<span class="t" style="letter-spacing:-0.072px;left:1011.22px;top:823px;font-size:15.66px;font-weight:400;font-style:normal;color:#212529;line-height:17px;">years</span>
<div style="position:absolute;left:1204.6px;top:812px;width:4.8px;height:1.4px;background:#333;"></div>
<span class="t" style="letter-spacing:-0.450px;left:1235.62px;top:803px;font-size:15.66px;font-weight:400;font-style:normal;color:#212529;line-height:17px;">Yes</span>
<span class="t" style="letter-spacing:0.384px;left:1347.02px;top:803px;font-size:15.66px;font-weight:400;font-style:normal;color:#212529;line-height:17px;">Shown</span>
<div style="position:absolute;left:1437.3px;top:812px;width:4.8px;height:1.4px;background:#333;"></div>
<span class="t" style="letter-spacing:0.700px;left:1519.37px;top:803px;font-size:12.6px;font-weight:400;font-style:normal;color:#212529;line-height:14px;">None</span>
<span class="t" style="letter-spacing:0.672px;left:1715.12px;top:803px;font-size:15.66px;font-weight:400;font-style:normal;color:#212529;line-height:17px;">No limitation</span>
<span class="t" style="letter-spacing:-0.450px;left:1842.92px;top:803px;font-size:15.66px;font-weight:400;font-style:normal;color:#212529;line-height:17px;">Yes</span>
</body></html>
